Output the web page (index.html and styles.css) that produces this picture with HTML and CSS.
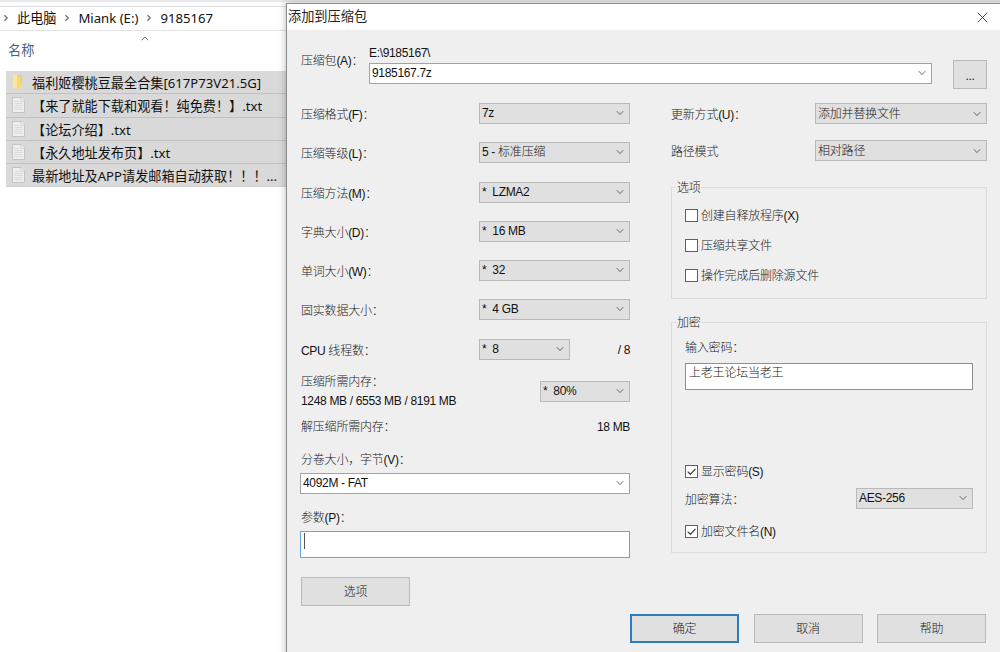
FILE: index.html
```html
<!DOCTYPE html>
<html lang="zh-CN">
<head>
<meta charset="utf-8">
<title>添加到压缩包</title>
<link rel="stylesheet" href="styles.css">
</head>
<body>
<svg class="defs" width="0" height="0" aria-hidden="true">
  <symbol id="chev" viewBox="0 0 8 6"><path d="M.8 1.200 4 4.600 7.200 1.200" fill="none" stroke="#666" stroke-width="1"/></symbol>
  <symbol id="crumb" viewBox="0 0 6 8"><path d="M1.400 1.200 4.200 4 1.400 6.800" fill="none" stroke="#777" stroke-width="1.400"/></symbol>
  <symbol id="check" viewBox="0 0 13 13"><path d="M2 6.600 5.200 9.800 11.200 3.400" fill="none" stroke="#444" stroke-width="1.500"/></symbol>
  <symbol id="doc" viewBox="0 0 13 16"><path d="M.5.5h8.500l3.500 3.500v11.500h-12z" fill="#eeeeee" stroke="#bdbdbd" stroke-width=".8"/><path d="M9 .5v3.500h3.500" fill="#fff" stroke="#b8b8b8" stroke-width=".7"/><path d="M2.500 4.500h5M2.500 6.500h8M2.500 8.500h8M2.500 10.500h8M2.500 12.500h8" stroke="#d2d2d2" stroke-width=".7"/></symbol>
  <symbol id="folder" viewBox="0 0 13 16"><path d="M1 1h7l2 1v12H1z" fill="#f0cf68"/><path d="M1 1h4v14L1 13.500z" fill="#ffe596"/><path d="M5 2.500h3.500V9H10v5.500H5z" fill="#f6d978"/></symbol>
</svg>
<main class="explorer">
  <div class="strip"></div>
  <nav class="address">
    <svg class="crumb"><use href="#crumb"/></svg><span class="c1">此电脑</span>
    <svg class="crumb"><use href="#crumb"/></svg><span class="c2">Miank (E:)</span>
    <svg class="crumb"><use href="#crumb"/></svg><span>9185167</span>
  </nav>
  <div class="colhead"><span>名称</span><svg class="sort" viewBox="0 0 8 5"><path d="M.7 4.200 4 1l3.300 3.200" fill="none" stroke="#777" stroke-width=".9"/></svg></div>
  <ul class="files">
    <li><svg><use href="#folder"/></svg><span>福利姬樱桃豆最全合集[617P73V21.5G]</span></li>
    <li><svg><use href="#doc"/></svg><span>【来了就能下载和观看！纯免费！】.txt</span></li>
    <li><svg><use href="#doc"/></svg><span>【论坛介绍】.txt</span></li>
    <li><svg><use href="#doc"/></svg><span>【永久地址发布页】.txt</span></li>
    <li><svg><use href="#doc"/></svg><span>最新地址及APP请发邮箱自动获取！！！...</span></li>
  </ul>
</main>
<section class="dialog">
  <header class="titlebar"><span>添加到压缩包</span><svg class="close" viewBox="0 0 11 11"><path d="M.7.7l9.600 9.600M10.300.7.7 10.300" stroke="#444" stroke-width="1"/></svg></header>
  <div class="archive">
    <label>压缩包<b>(A)</b>：</label>
    <div class="path"><b>E:\9185167\</b><div class="combo white"><b>9185167.7z</b><svg><use href="#chev"/></svg></div></div>
    <div class="btn browse"><b>...</b></div>
  </div>
  <div class="columns">
    <div class="left">
      <div class="row"><label>压缩格式<b>(F)</b>：</label><div class="combo"><b>7z</b><svg><use href="#chev"/></svg></div></div>
      <div class="row"><label>压缩等级<b>(L)</b>：</label><div class="combo"><span><b>5 - </b>标准压缩</span><svg><use href="#chev"/></svg></div></div>
      <div class="row"><label>压缩方法<b>(M)</b>：</label><div class="combo"><b>*&nbsp; LZMA2</b><svg><use href="#chev"/></svg></div></div>
      <div class="row"><label>字典大小<b>(D)</b>：</label><div class="combo"><b>*&nbsp; 16 MB</b><svg><use href="#chev"/></svg></div></div>
      <div class="row"><label>单词大小<b>(W)</b>：</label><div class="combo"><b>*&nbsp; 32</b><svg><use href="#chev"/></svg></div></div>
      <div class="row"><label>固实数据大小：</label><div class="combo"><b>*&nbsp; 4 GB</b><svg><use href="#chev"/></svg></div></div>
      <div class="row cpu"><label><b>CPU </b>线程数：</label><div class="combo"><b>*&nbsp; 8</b><svg><use href="#chev"/></svg></div><b class="total">/ 8</b></div>
      <div class="memory"><div class="lines"><span>压缩所需内存：</span><b>1248 MB / 6553 MB / 8191 MB</b></div><div class="combo"><b>*&nbsp; 80%</b><svg><use href="#chev"/></svg></div></div>
      <div class="unpack"><span>解压缩所需内存：</span><b>18 MB</b></div>
      <label class="over vol">分卷大小，字节<b>(V)</b>：</label>
      <div class="combo white volume"><b>4092M - FAT</b><svg><use href="#chev"/></svg></div>
      <label class="over par">参数<b>(P)</b>：</label>
      <div class="field focus"><i class="caret"></i></div>
      <div class="btn options">选项</div>
    </div>
    <div class="right">
      <div class="rrow"><label>更新方式<b>(U)</b>：</label><div class="combo">添加并替换文件<svg><use href="#chev"/></svg></div></div>
      <div class="rrow"><label>路径模式</label><div class="combo">相对路径<svg><use href="#chev"/></svg></div></div>
      <div class="group opts"><div class="legend"><span>选项</span></div>
        <div class="check"><i></i><span>创建自释放程序<b>(X)</b></span></div>
        <div class="check"><i></i><span>压缩共享文件</span></div>
        <div class="check"><i></i><span>操作完成后删除源文件</span></div>
      </div>
      <div class="group crypt"><div class="legend"><span>加密</span></div>
        <label class="pw">输入密码：</label>
        <div class="field pass">上老王论坛当老王</div>
        <div class="check show"><i><svg><use href="#check"/></svg></i><span>显示密码<b>(S)</b></span></div>
        <div class="algo"><label>加密算法：</label><div class="combo"><b>AES-256</b><svg><use href="#chev"/></svg></div></div>
        <div class="check names"><i><svg><use href="#check"/></svg></i><span>加密文件名<b>(N)</b></span></div>
      </div>
      <div class="actions"><div class="btn primary">确定</div><div class="btn">取消</div><div class="btn">帮助</div></div>
    </div>
  </div>
</section>
</body>
</html>
```
FILE: styles.css
```css
* { box-sizing: border-box; }
body { margin: 0; width: 1000px; height: 652px; overflow: hidden; position: relative; background: #fff; color: #111; }
.defs { position: absolute; }
b { font-weight: 400; color: #111; letter-spacing: -.33px; }

/* file list behind the dialog */
.explorer { font: 13.15px/20px "Noto Sans", "Noto Sans CJK SC", sans-serif; }
.strip { height: 7px; background: #fcfcfc; border-top: 2px solid #e9e9e9; border-bottom: 1px solid #dedede; }
.address { height: 24px; display: flex; align-items: center; padding: 0 0 1px 3px; border-bottom: 1px solid #e3e3e3; white-space: nowrap; }
.crumb { width: 6px; height: 8px; margin-right: 8px; flex: none; }
.c1, .c2 { margin-right: 8px; }
.colhead { height: 40px; display: flex; padding-left: 8px; color: #4c607a; align-items: flex-start; }
.colhead span { width: 133px; padding-top: 9px; }
.sort { width: 8px; height: 5px; margin-top: 5px; }
.files { list-style: none; margin: 0 0 0 6px; padding: 0; width: 280px; background: #d9d9d9; }
.files li { height: 23.3px; display: flex; align-items: center; padding-left: 6px; border-bottom: 1px solid #c2c2c2; white-space: nowrap; }
.files li:last-child { border-bottom-color: #d2d2d2; }
.files svg { width: 13px; height: 16px; margin-right: 7px; flex: none; }
.files span { line-height: 20px; padding-top: 2px; }

/* dialog window */
.dialog { position: absolute; left: 286px; top: 3px; width: 720px; height: 660px; background: #efefef; border: 1px solid #8c8c8c; box-shadow: 0 0 7px rgba(0,0,0,.3); font: 300 12px/16px "Liberation Sans", "Noto Sans CJK SC", sans-serif; letter-spacing: -.2px; color: #222; }
.titlebar { height: 26px; width: 712px; background: #fff; box-shadow: 8px 0 #fff; display: flex; justify-content: space-between; align-items: center; padding: 0 11px 0 1px; font-size: 13.2px; font-weight: 400; letter-spacing: 0; }
.close { width: 11px; height: 11px; }
.combo { height: 21px; display: flex; align-items: center; justify-content: space-between; background: #e0e0e0; border: 1px solid #b9b9b9; padding: 0 5px 1px 2px; white-space: pre; }
.combo svg { width: 8px; height: 6px; flex: none; }
.white { background: #fff; border-color: #a3a3a3; }
.btn { height: 29px; width: 109px; display: flex; align-items: center; justify-content: center; background: #e0e0e0; border: 1px solid #b9b9b9; }
label { padding-top: 3px; white-space: nowrap; }

.archive { height: 64px; display: flex; padding-left: 14px; }
.archive label { width: 68px; padding-top: 23px; }
.path { width: 563px; padding-top: 14px; }
.path > b { display: block; height: 19px; line-height: 18px; }
.browse { width: 34px; margin: 30px 0 0 21px; padding-top: 2px; }

.columns { display: flex; padding-left: 13px; }
.left { width: 330px; margin-right: 41px; }
.row { height: 39.25px; display: flex; align-items: center; }
.row label { width: 179px; padding-left: 1px; }
.row .combo { width: 151px; }
.cpu .combo { width: 91px; }
.total { margin-left: auto; padding-top: 2px; }
.memory { height: 43.25px; display: flex; justify-content: space-between; padding-left: 1px; }
.lines { display: flex; flex-direction: column; gap: 3px; padding-top: 5px; }
.memory .combo { width: 90px; margin-top: 12px; }
.unpack { height: 30px; display: flex; justify-content: space-between; align-items: center; padding-left: 1px; }
.over { display: block; padding-left: 1px; }
.vol { height: 31px; padding-top: 10px; }
.par { height: 37px; padding-top: 16px; }
.field { height: 27px; background: #fff; border: 1px solid #8f8f8f; padding: 2px 3px; }
.field.focus { border-color: #62a8dc; padding-top: 1px; }
.caret { display: block; width: 1px; height: 16px; background: #555; }
.options { margin: 19px 0 0 1px; }

.right { width: 316px; }
.rrow { height: 37px; display: flex; align-items: flex-start; justify-content: space-between; padding-top: 9px; }
.rrow label { padding-top: 4px; }
.rrow .combo { width: 172px; padding-bottom: 0; }
.group { border: 1px solid #dcdcdc; padding-left: 13px; }
.legend { height: 14px; margin-top: -8px; margin-left: -9px; }
.legend span { display: inline-block; background: #efefef; padding: 0 1px; }
.opts { height: 112px; margin-top: 19px; }
.check { display: flex; align-items: center; height: 30px; }
.check span { padding-top: 1px; }
.check i { width: 13px; height: 13px; border: 1px solid #606060; background: #fff; margin-right: 3px; flex: none; }
.check svg { width: 11px; height: 11px; display: block; }
.opts .legend { height: 20px; }
.crypt { height: 231px; margin-top: 23px; padding-right: 13px; }
.crypt .legend { height: 22px; }
.pw { display: block; height: 26px; }
.pass { padding-top: 1px; }
.show { margin-top: 66px; }
.algo { display: flex; justify-content: space-between; height: 29px; padding-top: 2px; }
.algo .combo { width: 117px; }
.algo label { padding-top: 4px; }
.names { margin-top: 1px; }
.actions { display: flex; gap: 14.5px; margin: 61px 0 0 -41px; width: 357px; }
.btn.primary { border: 2px solid #2d7cbd; }
.actions .btn { flex: none; padding-top: 1px; }
```
